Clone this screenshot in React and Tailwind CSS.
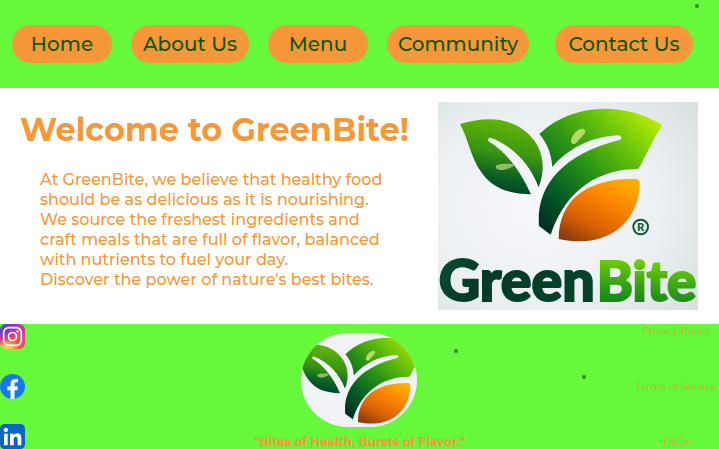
import { useId } from "react";

const navItems = [
  { label: "Home", width: "w-[100px]" },
  { label: "About Us", width: "w-[118px]" },
  { label: "Menu", width: "w-[100px]" },
  { label: "Community", width: "w-[142px]" },
  { label: "Contact Us", width: "w-[138px] ml-auto" },
];

function LeafMark() {
  const id = useId();
  const ref = (name) => `url(#${id}${name})`;
  return (
    <g>
      <defs>
        <linearGradient id={`${id}left`} x1="0.6" y1="0" x2="0.4" y2="1">
          <stop offset="0" stopColor="#63b808" />
          <stop offset="0.45" stopColor="#3a9512" />
          <stop offset="0.75" stopColor="#0b6024" />
          <stop offset="1" stopColor="#023c2a" />
        </linearGradient>
        <linearGradient id={`${id}body`} gradientUnits="userSpaceOnUse" x1="680" y1="80" x2="350" y2="400">
          <stop offset="0" stopColor="#b8ec06" />
          <stop offset="0.25" stopColor="#6cc50a" />
          <stop offset="0.55" stopColor="#268f16" />
          <stop offset="0.8" stopColor="#045a26" />
          <stop offset="1" stopColor="#012f24" />
        </linearGradient>
        <linearGradient id={`${id}fruit`} x1="0.85" y1="0" x2="0.15" y2="1">
          <stop offset="0" stopColor="#ffb000" />
          <stop offset="0.35" stopColor="#fb8500" />
          <stop offset="0.7" stopColor="#d96204" />
          <stop offset="1" stopColor="#8a3b0c" />
        </linearGradient>
      </defs>
      <path
        d="M90 87C170 63 232 70 278 103C337 146 352 210 326 277C301 210 249 153 184 129C177 126 171 134 176 139C231 174 270 225 303 298C237 297 187 280 154 232C122 188 115 132 90 87Z"
        fill={ref("left")}
      />
      <path
        d="M328 117C425 24 578 20 690 86C695 89 697 93 693 98C675 121 665 148 652 171C643 187 636 207 624 222C514 222 410 276 362 419L327 393C318 282 386 180 570 134C579 130 572 120 563 121C482 126 415 160 367 216C365 179 352 145 328 117Z"
        fill={ref("body")}
      />
      <path
        d="M386 432C387 314 470 252 610 251C626 250 631 256 629 276C622 376 540 465 386 432Z"
        fill={ref("fruit")}
      />
      <path d="M423 137C425 120 444 100 458 101C469 103 468 112 460 120L438 145C430 150 423 146 423 137Z" fill="#b8da61" />
      <path d="M197 214C203 206 227 206 247 207C255 208 252 213 244 217C226 227 197 230 197 214Z" fill="#8fbd68" />
    </g>
  );
}

function FullLogo() {
  const id = useId();
  return (
    <svg viewBox="24 21 780 624" className="block w-full" role="img" aria-label="GreenBite logo">
      <defs>
        <radialGradient id={`${id}bg`} cx="0.4" cy="0.5" r="0.75">
          <stop offset="0" stopColor="#f6f8fb" />
          <stop offset="0.6" stopColor="#edf0f3" />
          <stop offset="1" stopColor="#d9e1e3" />
        </radialGradient>
        <linearGradient id={`${id}dark`} x1="0" y1="0" x2="1" y2="0.3">
          <stop offset="0" stopColor="#075034" />
          <stop offset="0.4" stopColor="#033a29" />
          <stop offset="1" stopColor="#02432a" />
        </linearGradient>
        <linearGradient id={`${id}lime`} x1="0.3" y1="0" x2="0.2" y2="1">
          <stop offset="0.15" stopColor="#78d308" />
          <stop offset="0.6" stopColor="#2f9f14" />
          <stop offset="1" stopColor="#087325" />
        </linearGradient>
      </defs>
      <rect x="24" y="21" width="780" height="624" fill={`url(#${id}bg)`} />
      <LeafMark />
      <circle cx="632" cy="396" r="22" fill="none" stroke="#075c35" strokeWidth="6" />
      <text x="632" y="408" textAnchor="middle" className="font-['Lato'] text-[34px] font-black" fill="#075c35">
        R
      </text>
      <text
        x="26"
        y="618"
        className="font-['Lato'] text-[172px] font-black"
        fill={`url(#${id}dark)`}
        stroke={`url(#${id}dark)`}
        strokeWidth="6"
      >
        Green
      </text>
      <text
        x="500"
        y="618"
        className="font-['Lato'] text-[164px] font-black"
        fill={`url(#${id}lime)`}
        stroke={`url(#${id}lime)`}
        strokeWidth="6"
      >
        Bite
      </text>
    </svg>
  );
}

function InstagramIcon() {
  const id = useId();
  return (
    <svg viewBox="0 0 75 75" className="size-[25px]" aria-hidden="true">
      <defs>
        <radialGradient id={`${id}warm`} cx="0.27" cy="1.05" r="1">
          <stop offset="0" stopColor="#ffdd55" />
          <stop offset="0.2" stopColor="#ffb64c" />
          <stop offset="0.5" stopColor="#ff543e" />
          <stop offset="1" stopColor="#c837ab" />
        </radialGradient>
        <radialGradient id={`${id}cool`} cx="0" cy="0" r="0.8">
          <stop offset="0" stopColor="#3771c8" />
          <stop offset="0.25" stopColor="#5b45dd" />
          <stop offset="1" stopColor="#6600ff" stopOpacity="0" />
        </radialGradient>
      </defs>
      <rect width="75" height="75" rx="17" fill={`url(#${id}warm)`} />
      <rect width="75" height="75" rx="17" fill={`url(#${id}cool)`} />
      <rect x="11" y="11" width="53" height="53" rx="15" fill="none" stroke="white" strokeWidth="5" />
      <circle cx="37.5" cy="37.5" r="12" fill="none" stroke="white" strokeWidth="5" />
      <circle cx="53" cy="22" r="3.5" fill="white" />
    </svg>
  );
}

function FacebookIcon() {
  return (
    <svg viewBox="0 0 24 24" className="size-[25px]" aria-hidden="true">
      <circle cx="12" cy="12" r="12" fill="#1877f2" />
      <path
        d="M10.1 23.9V15.5H7.1V12H10.1V9.4C10.1 6.4 11.9 4.7 14.6 4.7C15.9 4.7 17.3 4.9 17.3 4.9V7.9H15.8C14.3 7.9 13.9 8.8 13.9 9.7V12H17.2L16.6 15.5H13.9V23.9Z"
        fill="white"
      />
    </svg>
  );
}

function LinkedInIcon() {
  return (
    <svg viewBox="0 0 75 75" className="size-[25px]" aria-hidden="true">
      <rect width="75" height="75" rx="14" fill="#0a66c2" />
      <circle cx="17.5" cy="18" r="6.5" fill="white" />
      <path
        d="M12 29H23V64H12ZM30 29H40.500V34C43 30 47 28 51.500 28C62 28 64 35 64 45V64H53V47C53 42 52 38 47.500 38C43 38 41 41.500 41 46V64H30Z"
        fill="white"
      />
    </svg>
  );
}

const socials = [
  { name: "Instagram", Icon: InstagramIcon },
  { name: "Facebook", Icon: FacebookIcon },
  { name: "LinkedIn", Icon: LinkedInIcon },
];

export default function App() {
  return (
    <div className="relative flex min-h-screen flex-col overflow-hidden bg-white font-['Montserrat','Inter',sans-serif]">
      <header className="bg-[#66f83a] py-[25px] pr-[26px] pl-3">
        <nav className="flex gap-[19px]" aria-label="Main">
          {navItems.map(({ label, width }) => (
            <button
              key={label}
              type="button"
              className={`h-[38px] shrink-0 rounded-full bg-[#f6973a] text-center text-[20px] font-medium whitespace-nowrap text-[#0b5a0b] ${width}`}
            >
              {label}
            </button>
          ))}
        </nav>
      </header>

      <main className="flex items-start justify-between pt-[14px] pr-[21px] pb-[14px] pl-5 text-[#f6973a]">
        <div className="pt-2">
          <h1 className="text-[32px] leading-[40px] font-bold whitespace-nowrap">Welcome to GreenBite!</h1>
          <p className="mt-5 pl-5 text-[16px] leading-[20px] font-medium whitespace-nowrap">
            At GreenBite, we believe that healthy food
            <br />
            should be as delicious as it is nourishing.
            <br />
            We source the freshest ingredients and
            <br />
            craft meals that are full of flavor, balanced
            <br />
            with nutrients to fuel your day.
            <br />
            Discover the power of nature's best bites.
          </p>
        </div>
        <div className="w-[260px] shrink-0">
          <FullLogo />
        </div>
      </main>

      <footer className="grid flex-1 grid-cols-[1fr_auto_1fr] items-start bg-[#66f83a] text-[#f6973a]">
        <ul className="flex flex-col gap-[25px]">
          {socials.map(({ name, Icon }) => (
            <li key={name}>
              <a href="#" aria-label={name} className="block w-[25px]">
                <Icon />
              </a>
            </li>
          ))}
        </ul>
        <div className="flex flex-col items-center gap-2 pt-[9px]">
          <svg
            viewBox="122 20 538 434"
            className="h-[94px] w-[116px] rounded-[50px] bg-[#f0f2f6]"
            role="img"
            aria-label="GreenBite leaves"
          >
            <LeafMark />
          </svg>
          <p className="text-[12px] leading-[14px] font-bold">"Bites of Health, Bursts of Flavor."</p>
        </div>
        <div className="flex h-[125px] flex-col items-center justify-between justify-self-end pr-0.5 text-[10px] leading-[14px] text-[#d3a63a]">
          <a href="#">Privacy Policy</a>
          <a href="#">Terms of Service</a>
          <a href="#">FAQs</a>
        </div>
      </footer>

      <span className="absolute top-1 left-[695px] size-1 rounded-full bg-[#38861f]" />
      <span className="absolute top-[349px] left-[454px] size-1 rounded-full bg-[#38861f]" />
      <span className="absolute top-[375px] left-[582px] size-1 rounded-full bg-[#38861f]" />
    </div>
  );
}
